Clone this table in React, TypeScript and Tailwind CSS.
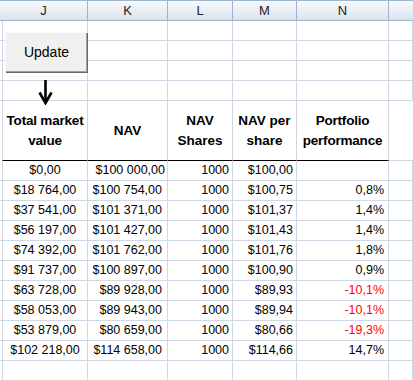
const cols = ["J", "K", "L", "M", "N"];

const widths = "grid-cols-[88px_80px_65px_64px_92px_1fr]";

type Row = {
  total: string;
  nav: string;
  shares: string;
  perShare: string;
  perf: string;
  neg?: boolean;
};

const rows: Row[] = [
  { total: "$0,00", nav: "$100 000,00", shares: "1000", perShare: "$100,00", perf: "" },
  { total: "$18 764,00", nav: "$100 754,00", shares: "1000", perShare: "$100,75", perf: "0,8%" },
  { total: "$37 541,00", nav: "$101 371,00", shares: "1000", perShare: "$101,37", perf: "1,4%" },
  { total: "$56 197,00", nav: "$101 427,00", shares: "1000", perShare: "$101,43", perf: "1,4%" },
  { total: "$74 392,00", nav: "$101 762,00", shares: "1000", perShare: "$101,76", perf: "1,8%" },
  { total: "$91 737,00", nav: "$100 897,00", shares: "1000", perShare: "$100,90", perf: "0,9%" },
  { total: "$63 728,00", nav: "$89 928,00", shares: "1000", perShare: "$89,93", perf: "-10,1%", neg: true },
  { total: "$58 053,00", nav: "$89 943,00", shares: "1000", perShare: "$89,94", perf: "-10,1%", neg: true },
  { total: "$53 879,00", nav: "$80 659,00", shares: "1000", perShare: "$80,66", perf: "-19,3%", neg: true },
  { total: "$102 218,00", nav: "$114 658,00", shares: "1000", perShare: "$114,66", perf: "14,7%" },
];

const cell = "border-r border-[#d0d7e5] flex items-center overflow-hidden whitespace-nowrap";
const head = "border-r border-r-[#d0d7e5] border-b border-b-black flex items-center justify-center";

function EmptyRow() {
  return (
    <div className={`grid ${widths} h-[20px] border-b border-[#d0d7e5]`}>
      {Array.from({ length: 6 }).map((_, i) => (
        <div key={i} className={`${cell} ${i === 0 ? "border-l border-l-[#d0d7e5] ml-[2px]" : ""}`} />
      ))}
    </div>
  );
}

export default function App() {
  return (
    <div
      className="relative w-[413px] h-[380px] bg-white overflow-hidden text-black"
      style={{ fontFamily: '"Liberation Sans", Arial, sans-serif' }}
    >
      {/* column letters */}
      <div className={`grid ${widths} h-[21px] border-y border-[#9eb6ce] bg-gradient-to-b from-[#f7f9fc] to-[#dce3ed]`}>
        {cols.map((c) => (
          <div key={c} className="border-r border-[#9eb6ce] flex items-center justify-center text-[13px] text-[#222]">
            {c}
          </div>
        ))}
        <div />
      </div>

      <EmptyRow />
      <EmptyRow />
      <EmptyRow />
      <EmptyRow />

      {/* header row */}
      <div className={`grid ${widths} h-[60px] font-bold text-[13.5px] leading-[20px] text-center`}>
        <div className={`${head} ml-[2px] border-l border-l-[#d0d7e5] tracking-[-0.2px]`}>Total market<br />value</div>
        <div className={head}>NAV</div>
        <div className={head}>NAV<br />Shares</div>
        <div className={head}>NAV per<br />share</div>
        <div className={`${head} tracking-[-0.2px]`}>Portfolio<br />performance</div>
        <div className="border-b border-[#d0d7e5]" />
      </div>

      {rows.map((r, i) => (
        <div key={i} className={`grid ${widths} h-[20px] border-b border-[#d0d7e5] text-[12.5px]`}>
          <div className={`${cell} justify-center ml-[2px] border-l border-l-[#d0d7e5]`}>{r.total}</div>
          <div className={`${cell} justify-end ${i === 0 ? "pr-[2px]" : "pr-[5px]"}`}>{r.nav}</div>
          <div className={`${cell} justify-end pr-[3px]`}>{r.shares}</div>
          <div className={`${cell} justify-end pr-[3px]`}>{r.perShare}</div>
          <div className={`${cell} justify-end pr-[4px] ${r.neg ? "text-[#ff0000]" : ""}`}>{r.perf}</div>
          <div className={cell} />
        </div>
      ))}

      <EmptyRow />

      {/* button over the sheet */}
      <button className="absolute left-[5px] top-[32px] w-[82px] h-[40px] bg-[#f0f0f0] text-[14px] text-black shadow-[inset_-1px_-1px_0_#a0a0a0,1px_1px_0_#696969] border-t border-l border-[#fafafa]">
        Update
      </button>

      {/* arrow */}
      <svg className="absolute left-[37px] top-[80px]" width="18" height="25" viewBox="0 0 18 25">
        <path d="M8.5 0 V22" stroke="black" strokeWidth="2.6" />
        <path d="M2.5 12.5 L8.5 23 L14.5 12.5" stroke="black" strokeWidth="2.6" fill="none" strokeLinejoin="miter" />
      </svg>
    </div>
  );
}
